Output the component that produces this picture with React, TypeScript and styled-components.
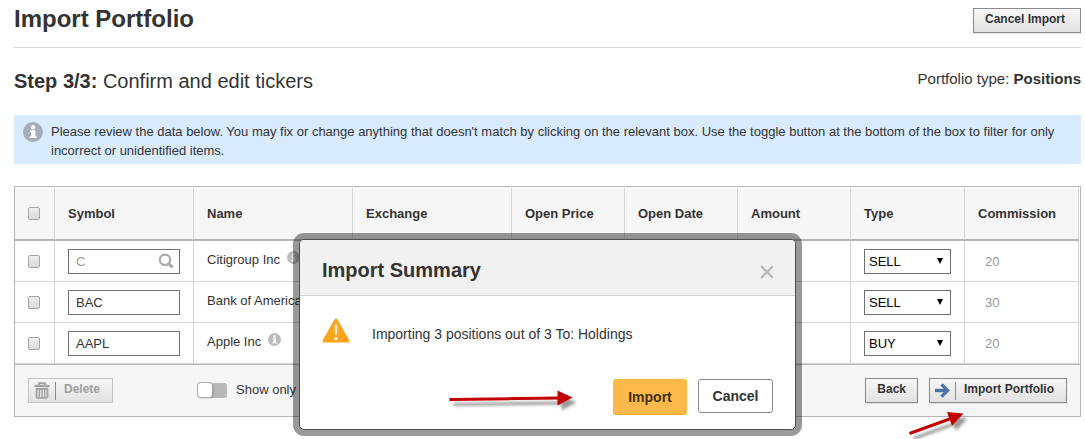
import React from "react";
import styled, { createGlobalStyle } from "styled-components";

const GlobalStyle = createGlobalStyle`
  *, *::before, *::after { box-sizing: border-box; }
  body {
    margin: 0;
    background: #fff;
    color: #333;
    font: 13px/19px Arial, "Liberation Sans", sans-serif;
  }
  button, input, select { font-family: inherit; margin: 0; }
`;

const Page = styled.main`
  position: relative;
  min-height: 100vh;
  overflow: hidden;
  padding: 0 4px 0 14px;
`;

const PageHeader = styled.header`
  display: flex;
  justify-content: space-between;
  align-items: flex-start;
  padding: 4px 0 14px;
  border-bottom: 1px solid #d5d5d5;
`;

const PageTitle = styled.h1`
  margin: 0;
  font-size: 24px;
  line-height: 29px;
`;

const StepBar = styled.section`
  display: flex;
  justify-content: space-between;
  align-items: flex-start;
  padding: 21px 0 22px;
`;

const StepTitle = styled.h2`
  margin: 0;
  font-size: 20px;
  font-weight: normal;
  line-height: 24px;
`;

const PortfolioType = styled.p`
  margin: 0;
  font-size: 15px;
  line-height: 20px;
`;

const Notice = styled.div`
  display: flex;
  gap: 8px;
  margin-bottom: 22px;
  padding: 7px 9px 4px;
  background: #d9ebff;
  svg { flex: none; }
  p { margin: 0; }
`;

const GreyButton = styled.button`
  display: flex;
  align-items: center;
  height: 25px;
  padding: 0 11px 3px;
  border: 1px solid #8a8a8a;
  border-radius: 0;
  background: linear-gradient(#f6f6f6, #e2e2e2);
  box-shadow: 0 1px 1px rgba(0, 0, 0, 0.08);
  color: #333;
  font-size: 12px;
  font-weight: bold;
  line-height: 16px;
  white-space: nowrap;
  &:disabled {
    border-color: #c4c4c4;
    color: #a0a0a0;
    box-shadow: none;
  }
`;

const HeaderButton = styled(GreyButton)`
  margin-top: 4px;
  padding: 0 15px 3px 11px;
`;

const IconButton = styled(GreyButton)`
  padding: 0 12px 0 5px;
  > span { padding-bottom: 3px; }
`;

const Divider = styled.i`
  width: 1px;
  height: 18px;
  margin: 0 8px 0 5px;
  background: #8a8a8a;
`;

const Panel = styled.section`
  position: relative;
  border: 1px solid #b5b5b5;
`;

const TableWrap = styled.div`
  padding: 1px 1px 0 0;
`;

const Table = styled.table`
  width: 100%;
  table-layout: fixed;
  border-collapse: separate;
  border-spacing: 0;
`;

const HeadCell = styled.th`
  height: 53px;
  padding: 0 0 0 13px;
  border-right: 1px solid #d5d5d5;
  border-bottom: 2px solid #b5b5b5;
  background: #f6f6f6;
  text-align: left;
  white-space: nowrap;
`;

const Cell = styled.td<{ $indent?: number }>`
  height: 41px;
  padding: 0 0 0 ${(p) => p.$indent ?? 13}px;
  border-right: 1px solid #d5d5d5;
  border-bottom: 1px solid #d5d5d5;
  white-space: nowrap;
`;

const Commission = styled(Cell)`
  color: #999;
`;

const Checkbox = styled.input.attrs({ type: "checkbox" })`
  display: block;
  appearance: none;
  width: 12px;
  height: 13px;
  border: 1px solid #a5a5a5;
  border-radius: 2px;
  background: linear-gradient(#eee, #dadada);
`;

const SymbolField = styled.div`
  display: flex;
  align-items: center;
  width: 112px;
  height: 25px;
  padding-right: 5px;
  border: 1px solid #707070;
  background: #fff;
`;

const SymbolInput = styled.input<{ $muted?: boolean }>`
  flex: 1;
  min-width: 0;
  height: 23px;
  padding: 1px 0 0 7px;
  border: 0;
  background: none;
  outline: none;
  color: ${(p) => (p.$muted ? "#999" : "#333")};
  font-size: 13px;
`;

const NameLabel = styled.div`
  display: flex;
  align-items: center;
  gap: 7px;
  padding-bottom: 3px;
  svg { margin-bottom: 4px; }
`;

const SelectBox = styled.div`
  position: relative;
  width: 87px;
  height: 25px;
  svg {
    position: absolute;
    right: 7px;
    top: 9px;
    pointer-events: none;
  }
`;

const TypeSelect = styled.select`
  appearance: none;
  display: block;
  width: 100%;
  height: 25px;
  padding: 0 20px 0 4px;
  border: 1px solid #707070;
  border-radius: 0;
  background: #fff;
  color: #000;
  font-size: 13px;
`;

const PanelFooter = styled.footer`
  display: flex;
  align-items: center;
  height: 52px;
  padding: 0 13px;
  border-top: 1px solid #b5b5b5;
  background: #f6f6f6;
`;

const Filter = styled.label`
  display: flex;
  align-items: center;
  gap: 9px;
  margin-left: 85px;
  padding-bottom: 2px;
`;

const Toggle = styled.input.attrs({ type: "checkbox", role: "switch" })`
  appearance: none;
  display: block;
  width: 29px;
  height: 15px;
  margin-top: 2px;
  border-radius: 3px;
  background: #b8b8b8;
  &::before {
    content: "";
    display: block;
    width: 14px;
    height: 14px;
    border-radius: 3px;
    background: #fff;
    box-shadow: 0 0 0 1px #aaa, 1px 1px 2px rgba(0, 0, 0, 0.4);
  }
  &:checked::before { margin-left: 15px; }
`;

const FooterActions = styled.div`
  display: flex;
  gap: 11px;
  margin-left: auto;
`;

const Dialog = styled.div`
  position: absolute;
  top: 239px;
  left: 14px;
  right: 4px;
  width: 497px;
  margin: 0 auto;
  border: 1px solid #4c4c4c;
  border-radius: 5px;
  background: #fff;
  box-shadow: 0 0 0 6px rgba(0, 0, 0, 0.4);
`;

const DialogHeader = styled.header`
  display: flex;
  justify-content: space-between;
  align-items: flex-start;
  padding: 18px 21px 13px 22px;
  border-bottom: 1px solid #d5d5d5;
  border-radius: 4px 4px 0 0;
  background: #f1f1f1;
  h2 {
    margin: 0;
    font-size: 20px;
    line-height: 24px;
  }
`;

const CloseButton = styled.button`
  width: 14px;
  height: 14px;
  margin-top: 7px;
  padding: 0;
  border: 0;
  background: none;
  svg { display: block; }
`;

const Message = styled.div`
  display: flex;
  gap: 22px;
  padding: 22px 22px 0;
  p {
    margin: 0;
    padding-top: 6px;
    font-size: 14px;
    line-height: 20px;
  }
`;

const DialogActions = styled.div`
  display: flex;
  justify-content: flex-end;
  align-items: flex-start;
  gap: 11px;
  padding: 35px 22px 14px;
`;

const DialogButton = styled.button<{ $primary?: boolean }>`
  width: ${(p) => (p.$primary ? 74 : 75)}px;
  height: ${(p) => (p.$primary ? 36 : 34)}px;
  padding: 0;
  border: 1px solid ${(p) => (p.$primary ? "#fdb94a" : "#8a8a8a")};
  border-bottom-color: ${(p) => (p.$primary ? "#eda836" : "#8a8a8a")};
  border-radius: 3px;
  background: ${(p) => (p.$primary ? "#fdb94a" : "#fff")};
  color: ${(p) => (p.$primary ? "#3f3008" : "#333")};
  font-size: 14px;
  font-weight: bold;
`;

const DialogArrow = styled.svg`
  position: absolute;
  left: 145px;
  top: 148px;
`;

const FooterArrow = styled.svg`
  position: absolute;
  right: 100px;
  bottom: -23px;
`;

function InfoIcon({ size, color, glyph }: { size: number; color: string; glyph: string }) {
  return (
    <svg width={size} height={size} viewBox="0 0 20 20" aria-hidden="true">
      <circle cx="10" cy="10" r="10" fill={color} />
      <circle cx="10" cy="5.3" r="2.2" fill={glyph} />
      <path d="M7 8.2h5.4v6h1.2V16H6.6v-1.8h1.6V10H7z" fill={glyph} />
    </svg>
  );
}

const SearchIcon = () => (
  <svg width="16" height="16" viewBox="0 0 16 16" fill="none" stroke="#aaa" aria-hidden="true">
    <circle cx="7" cy="6.8" r="5.2" strokeWidth="2.2" />
    <path d="M10.6 10.6 14.6 14.4" strokeWidth="3" />
  </svg>
);

const TrashIcon = () => (
  <svg width="16" height="17" viewBox="0 0 16 17" fill="none" stroke="#a3a3a3" aria-hidden="true">
    <path d="M5 3V1.2h6V3" strokeWidth="1.8" />
    <path d="M.5 4h15" strokeWidth="2.4" />
    <path d="M2.5 6.5v8q0 1.4 1.4 1.4h8.2q1.4 0 1.4-1.4v-8M2 7h12" strokeWidth="1.8" />
    <path d="M5.3 7v8M8 7v8M10.7 7v8" strokeWidth="1.5" />
  </svg>
);

const ArrowRightIcon = () => (
  <svg width="15" height="15" viewBox="0 0 15 15" fill="none" stroke="#4c73a3" aria-hidden="true">
    <path d="M0 7.5h12" strokeWidth="3.4" />
    <path d="M6.5 1.4 12.6 7.5 6.5 13.6" strokeWidth="3.2" />
  </svg>
);

const WarningIcon = () => (
  <svg width="28" height="26" viewBox="0 0 28 26" aria-hidden="true">
    <path d="M14 2 26 23H2z" fill="#fba51c" stroke="#fba51c" strokeWidth="3" strokeLinejoin="round" />
    <path d="M12.4 7.5q0-1.5 1.6-1.5t1.6 1.5L15 17h-2z" fill="#ffd792" />
    <path d="M14 7.5V16" stroke="#fff" strokeWidth="1" />
    <circle cx="14" cy="20.5" r="1.6" fill="#fff" />
  </svg>
);

const columns: [string, number][] = [
  ["Symbol", 139],
  ["Name", 159],
  ["Exchange", 159],
  ["Open Price", 113],
  ["Open Date", 113],
  ["Amount", 113],
  ["Type", 114],
  ["Commission", 114],
];

const rows = [
  { symbol: "C", name: "Citigroup Inc", info: true, search: true, type: "SELL", commission: 20 },
  { symbol: "BAC", name: "Bank of America", info: false, search: false, type: "SELL", commission: 30 },
  { symbol: "AAPL", name: "Apple Inc", info: true, search: false, type: "BUY", commission: 20 },
];

export default function App() {
  return (
    <>
      <GlobalStyle />
      <Page>
        <PageHeader>
          <PageTitle>Import Portfolio</PageTitle>
          <HeaderButton type="button">Cancel Import</HeaderButton>
        </PageHeader>

        <StepBar>
          <StepTitle>
            <strong>Step 3/3:</strong> Confirm and edit tickers
          </StepTitle>
          <PortfolioType>
            Portfolio type: <strong>Positions</strong>
          </PortfolioType>
        </StepBar>

        <Notice>
          <InfoIcon size={20} color="#a2aeba" glyph="#fff" />
          <p>
            Please review the data below. You may fix or change anything that doesn't match by clicking on the
            relevant box. Use the toggle button at the bottom of the box to filter for only incorrect or
            unidentified items.
          </p>
        </Notice>

        <Panel>
          <TableWrap>
            <Table>
              <colgroup>
                <col style={{ width: 40 }} />
                {columns.map(([label, width]) => (
                  <col key={label} style={{ width }} />
                ))}
              </colgroup>
              <thead>
                <tr>
                  <HeadCell>
                    <Checkbox aria-label="Select all" />
                  </HeadCell>
                  {columns.map(([label]) => (
                    <HeadCell key={label} scope="col">
                      {label}
                    </HeadCell>
                  ))}
                </tr>
              </thead>
              <tbody>
                {rows.map((row) => (
                  <tr key={row.symbol}>
                    <Cell>
                      <Checkbox aria-label={`Select ${row.symbol}`} />
                    </Cell>
                    <Cell>
                      <SymbolField>
                        <SymbolInput
                          aria-label={`Symbol for ${row.name}`}
                          defaultValue={row.symbol}
                          $muted={row.search}
                        />
                        {row.search && <SearchIcon />}
                      </SymbolField>
                    </Cell>
                    <Cell>
                      <NameLabel>
                        {row.name}
                        {row.info && <InfoIcon size={13} color="#bbb" glyph="#f4f4f4" />}
                      </NameLabel>
                    </Cell>
                    <Cell />
                    <Cell />
                    <Cell />
                    <Cell />
                    <Cell>
                      <SelectBox>
                        <TypeSelect aria-label={`Type for ${row.name}`} defaultValue={row.type}>
                          <option>SELL</option>
                          <option>BUY</option>
                        </TypeSelect>
                        <svg width="7" height="6" viewBox="0 0 7 6" aria-hidden="true">
                          <path d="M0 0h6L3 6z" fill="#000" />
                        </svg>
                      </SelectBox>
                    </Cell>
                    <Commission $indent={20}>{row.commission}</Commission>
                  </tr>
                ))}
              </tbody>
            </Table>
          </TableWrap>
          <PanelFooter>
            <IconButton type="button" disabled>
              <TrashIcon />
              <Divider />
              <span>Delete</span>
            </IconButton>
            <Filter>
              <Toggle />
              Show only
            </Filter>
            <FooterActions>
              <GreyButton type="button">Back</GreyButton>
              <IconButton type="button">
                <ArrowRightIcon />
                <Divider />
                <span>Import Portfolio</span>
              </IconButton>
            </FooterActions>
          </PanelFooter>
          <FooterArrow width="80" height="34" viewBox="900 405 80 34" aria-hidden="true">
            <defs>
              <filter id="footerShadow" x="-20%" y="-20%" width="150%" height="180%">
                <feDropShadow dx="4" dy="5" stdDeviation="1.5" floodColor="#000" floodOpacity="0.4" />
              </filter>
            </defs>
            <g filter="url(#footerShadow)">
              <path d="M909.5 433.5 951 418.5" stroke="#c00000" strokeWidth="3" />
              <path d="M963.5 413.5 947 412l5 13.8z" fill="#c00000" />
            </g>
          </FooterArrow>
        </Panel>

        <Dialog role="dialog" aria-labelledby="summaryTitle">
          <DialogHeader>
            <h2 id="summaryTitle">Import Summary</h2>
            <CloseButton type="button" aria-label="Close">
              <svg width="14" height="14" viewBox="0 0 14 14" aria-hidden="true">
                <path d="M1 1 13 13M13 1 1 13" stroke="#bbb" strokeWidth="2.4" />
              </svg>
            </CloseButton>
          </DialogHeader>
          <Message>
            <WarningIcon />
            <p>Importing 3 positions out of 3 To: Holdings</p>
          </Message>
          <DialogActions>
            <DialogButton type="button" $primary>
              Import
            </DialogButton>
            <DialogButton type="button">Cancel</DialogButton>
          </DialogActions>
          <DialogArrow width="140" height="26" viewBox="445 388 140 26" aria-hidden="true">
            <defs>
              <filter id="dialogShadow" x="-5%" y="-30%" width="115%" height="220%">
                <feDropShadow dx="4" dy="5" stdDeviation="1.5" floodColor="#000" floodOpacity="0.4" />
              </filter>
            </defs>
            <g filter="url(#dialogShadow)">
              <path d="M449.5 399.5 560 398" stroke="#c00000" strokeWidth="3" />
              <path d="M572.5 397.5 557.5 390.5v15z" fill="#c00000" />
            </g>
          </DialogArrow>
        </Dialog>
      </Page>
    </>
  );
}
